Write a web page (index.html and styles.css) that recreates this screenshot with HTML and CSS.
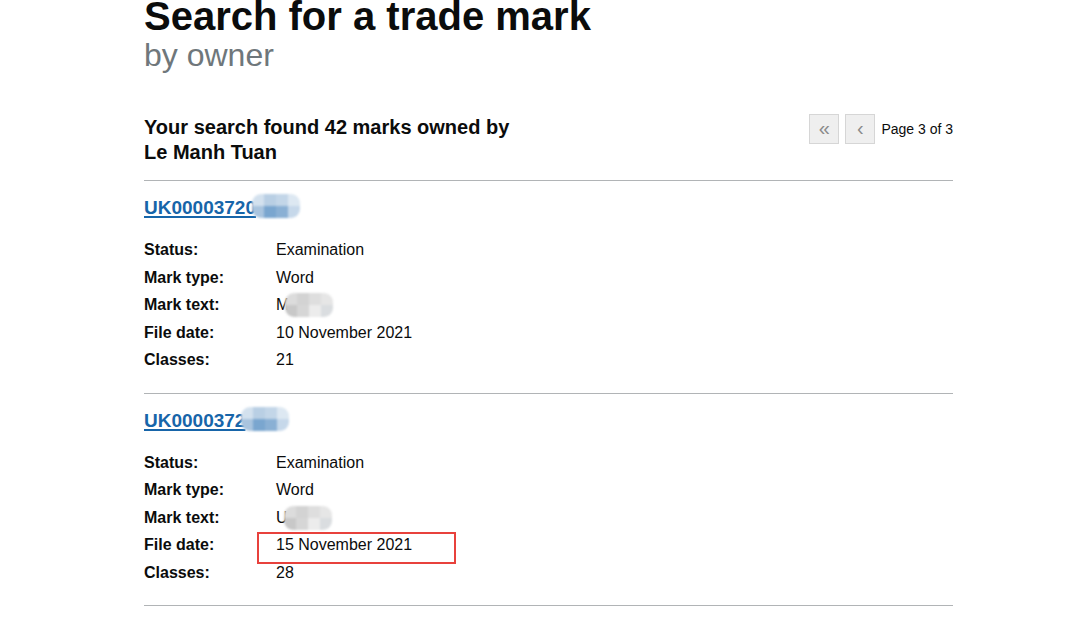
FILE: index.html
```html
<!DOCTYPE html>
<html lang="en">
<head>
    <meta charset="UTF-8">
    <meta name="viewport" content="width=device-width, initial-scale=1.0">
    <title>Search for a trade mark</title>
    <link rel="stylesheet" href="styles.css">
</head>
<body>
    <div class="container">
        <h1 class="title">Search for a trade mark <span class="caption">by owner</span></h1>

        <div class="results-head">
            <h2>Your search found 42 marks owned by Le Manh Tuan</h2>
            <div class="pager">
                <button class="pager-btn" aria-label="First page">&laquo;</button>
                <button class="pager-btn" aria-label="Previous page">&lsaquo;</button>
                <span class="pager-text">Page 3 of 3</span>
            </div>
        </div>

        <div class="result">
            <a class="mark-link" href="#">UK00003720<span class="mosaic blue"><span class="tiles"><i></i><i></i><i></i><i></i><i></i><i></i><i></i><i></i></span></span></a>
            <dl class="details">
                <dt>Status:</dt><dd>Examination</dd>
                <dt>Mark type:</dt><dd>Word</dd>
                <dt>Mark text:</dt><dd>M<span class="mosaic grey"><span class="tiles"><i></i><i></i><i></i><i></i><i></i><i></i><i></i><i></i></span></span></dd>
                <dt>File date:</dt><dd>10 November 2021</dd>
                <dt>Classes:</dt><dd>21</dd>
            </dl>
        </div>

        <div class="result">
            <a class="mark-link" href="#">UK0000372<span class="mosaic blue"><span class="tiles"><i></i><i></i><i></i><i></i><i></i><i></i><i></i><i></i></span></span></a>
            <dl class="details">
                <dt>Status:</dt><dd>Examination</dd>
                <dt>Mark type:</dt><dd>Word</dd>
                <dt>Mark text:</dt><dd>U<span class="mosaic grey"><span class="tiles"><i></i><i></i><i></i><i></i><i></i><i></i><i></i><i></i></span></span></dd>
                <dt>File date:</dt><dd><span class="highlight">15 November 2021</span></dd>
                <dt>Classes:</dt><dd>28</dd>
            </dl>
        </div>
    </div>
</body>
</html>
```

FILE: styles.css
```css
body {
    margin: 0;
    background: #fff;
    color: #0b0c0c;
    font-family: "Liberation Sans", Arial, sans-serif;
}
.container {
    width: 809px;
    margin-left: 144px;
}
.title {
    margin: -6px 0 0;
    font-size: 40px;
    line-height: 44px;
    font-weight: bold;
}
.caption {
    display: block;
    margin-top: -3px;
    font-size: 32px;
    line-height: 40px;
    font-weight: normal;
    color: #6f777b;
}
.results-head {
    display: flex;
    justify-content: space-between;
    align-items: flex-start;
    margin-top: 40px;
    padding-bottom: 15px;
    border-bottom: 1px solid #b1b4b6;
}
.results-head h2 {
    width: 380px;
    margin: 0;
    font-size: 20px;
    line-height: 25px;
}
.pager {
    display: flex;
    align-items: center;
    gap: 6px;
    margin-top: -1px;
}
.pager-btn {
    width: 30px;
    height: 30px;
    padding: 0 0 3px;
    border: 1px solid #d6d6d6;
    background: #efefef;
    color: #8a8a8a;
    font-family: "Liberation Sans", Arial, sans-serif;
    font-size: 20px;
    line-height: 1;
}
.pager-text {
    font-size: 14px;
}
.result {
    padding-top: 14px;
    padding-bottom: 19px;
    border-bottom: 1px solid #b1b4b6;
}
.mark-link {
    font-size: 19px;
    line-height: 25px;
    font-weight: bold;
    color: #1765a9;
    text-decoration: underline;
    text-decoration-thickness: 2px;
    text-underline-offset: 2px;
}
.details {
    display: grid;
    grid-template-columns: 132px auto;
    margin: 16px 0 0;
    font-size: 16px;
    line-height: 27.5px;
}
.details dt {
    font-weight: bold;
}
.details dd {
    margin: 0;
}
/* blurred-out part of the text, laid over the line */
.mosaic {
    position: relative;
    display: inline-block;
    width: 44px;
    height: 1px;
}
.tiles {
    position: absolute;
    left: -4px;
    top: -16px;
    display: grid;
    grid-template-columns: repeat(4, 12px);
    grid-template-rows: 12px 12px;
    border-radius: 9px;
    overflow: hidden;
    filter: blur(0.8px);
}
.mark-link .tiles {
    top: -19px;
}
.mosaic.blue i:nth-child(1) { background: #d3e1ee; }
.mosaic.blue i:nth-child(2) { background: #b9cfe4; }
.mosaic.blue i:nth-child(3) { background: #c3d6e8; }
.mosaic.blue i:nth-child(4) { background: #dde8f2; }
.mosaic.blue i:nth-child(5) { background: #a9c4de; }
.mosaic.blue i:nth-child(6) { background: #7aa6cf; }
.mosaic.blue i:nth-child(7) { background: #8ab0d4; }
.mosaic.blue i:nth-child(8) { background: #c6d8ea; }
.mosaic.grey i:nth-child(1) { background: #dcdcdc; }
.mosaic.grey i:nth-child(2) { background: #d3d3d3; }
.mosaic.grey i:nth-child(3) { background: #dedede; }
.mosaic.grey i:nth-child(4) { background: #e6e6e6; }
.mosaic.grey i:nth-child(5) { background: #c8c8c8; }
.mosaic.grey i:nth-child(6) { background: #d6d6d6; }
.mosaic.grey i:nth-child(7) { background: #ececec; }
.mosaic.grey i:nth-child(8) { background: #dadde0; }
.highlight {
    position: relative;
}
.highlight::after {
    content: "";
    position: absolute;
    left: -19px;
    top: -4px;
    width: 195px;
    height: 28px;
    border: 2px solid #e8413c;
}
```
